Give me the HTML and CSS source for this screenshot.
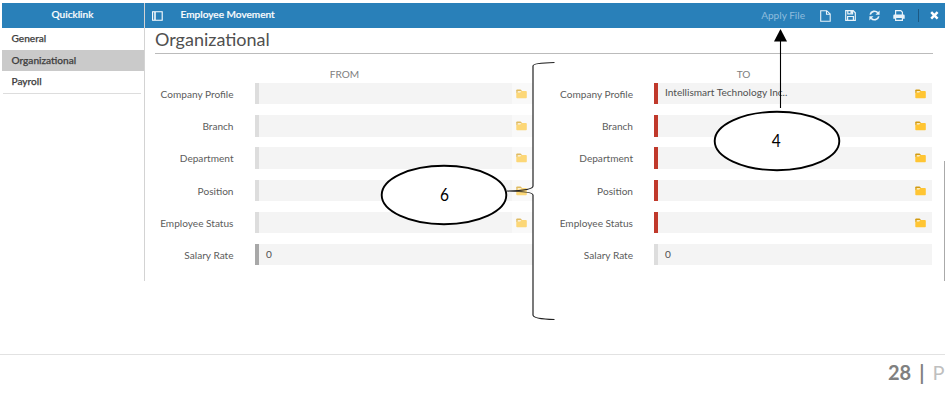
FILE: index.html
```html
<!DOCTYPE html>
<html lang="en">
<head>
<meta charset="utf-8">
<title>Employee Movement</title>
<link rel="stylesheet" href="styles.css">
</head>
<body>
<svg class="defs" aria-hidden="true">
  <symbol id="folder" viewBox="0 0 11 10">
    <path d="M.3 4V1.2Q.3.4 1.1.4h3.3q.5 0 .8.5l.5.9v2.2z" fill="#d39b10"/>
    <path d="M1.6 2.1h3.6V4H1.6z" fill="#fff4d5"/>
    <path d="M.3 3.5h3.9l1.2-1.4H10q.8 0 .8.8v5.6q0 .8-.8.8H1.1q-.8 0-.8-.8z" fill="#ffc533"/>
  </symbol>
</svg>
<div class="app">
  <aside class="sidebar">
    <div class="side-head">Quicklink</div>
    <nav class="links">
      <a class="link">General</a>
      <a class="link active">Organizational</a>
      <a class="link">Payroll</a>
    </nav>
  </aside>
  <main class="main">
    <header class="bar">
      <svg class="panel" width="11" height="10" viewBox="0 0 11 10" fill="none" stroke="#fff"><path d="M.6.8h9.6v8.4H.6z" stroke-width="1.1"/><path d="M3 1v8" stroke-width="1.5"/></svg>
      <span class="bar-title">Employee Movement</span>
      <div class="tools">
        <span class="apply">Apply File</span>
        <svg class="file" width="11" height="12" viewBox="0 0 11 12" fill="none" stroke="#e8f2f9" stroke-width="1.1"><path d="M.7.7h6L10.2 4v7.3H.7zM6.5.8v3.5h3.6"/></svg>
        <svg class="save" width="11" height="11" viewBox="0 0 11 11" fill="none" stroke="#e8f2f9" stroke-width="1.2"><path d="M.7.7h7.5l2.1 2v7.6H.7z"/><path d="M2.8.8v3h4.8v-3M2.6 10V6.5h5.8V10"/><path d="M6.2 1v2.5" stroke-width="1.6"/></svg>
        <svg class="sync" width="11" height="11" viewBox="0 0 11 11"><path d="M1.2 4.6A4.4 4.4 0 0 1 8.8 2.8M9.8 6.4A4.4 4.4 0 0 1 2.2 8.2" fill="none" stroke="#e8f2f9" stroke-width="1.7"/><path d="M10.6.6v4.1H6.5zM.4 10.4V6.3h4.1z" fill="#e8f2f9"/></svg>
        <svg class="print" width="12" height="11" viewBox="0 0 12 11"><path d="M2.6 5V.6h5.2l1.6 1.6V5" fill="none" stroke="#e8f2f9" stroke-width="1.2"/><path d="M1.5 4.6h9q1.2 0 1.2 1.2v3H.3v-3q0-1.2 1.2-1.2z" fill="#e8f2f9"/><path d="M2.6 7.4h6.8v2.9H2.6z" fill="#2980b9" stroke="#e8f2f9" stroke-width="1.2"/></svg>
        <i class="sep"></i>
        <svg class="close" width="9" height="9" viewBox="0 0 9 9"><path d="M1.2 1.2l6.4 6.4M7.6 1.2L1.2 7.6" stroke="#fff" stroke-width="2.5"/></svg>
      </div>
    </header>
    <h1 class="heading">Organizational</h1>
    <div class="form">
      <section class="column from">
        <h2 class="caption">FROM</h2>
        <div class="row"><label>Company Profile</label><div class="field"><span class="pick"><svg><use href="#folder"/></svg></span></div></div>
        <div class="row"><label>Branch</label><div class="field"><span class="pick"><svg><use href="#folder"/></svg></span></div></div>
        <div class="row"><label>Department</label><div class="field"><span class="pick"><svg><use href="#folder"/></svg></span></div></div>
        <div class="row"><label>Position</label><div class="field"><span class="pick"><svg><use href="#folder"/></svg></span></div></div>
        <div class="row"><label>Employee Status</label><div class="field"><span class="pick"><svg><use href="#folder"/></svg></span></div></div>
        <div class="row"><label>Salary Rate</label><div class="field dark">0</div></div>
      </section>
      <section class="column to">
        <h2 class="caption">TO</h2>
        <div class="row"><label>Company Profile</label><div class="field required"><span class="value">Intellismart Technology Inc..</span><span class="pick"><svg><use href="#folder"/></svg></span></div></div>
        <div class="row"><label>Branch</label><div class="field required"><span class="pick"><svg><use href="#folder"/></svg></span></div></div>
        <div class="row"><label>Department</label><div class="field required"><span class="pick"><svg><use href="#folder"/></svg></span></div></div>
        <div class="row"><label>Position</label><div class="field required"><span class="pick"><svg><use href="#folder"/></svg></span></div></div>
        <div class="row"><label>Employee Status</label><div class="field required"><span class="pick"><svg><use href="#folder"/></svg></span></div></div>
        <div class="row"><label>Salary Rate</label><div class="field">0</div></div>
      </section>
    </div>
    <i class="scroll"></i>
  </main>
</div>
<footer class="footer"><b class="page">28</b><i class="pipe">|</i><span class="p">P</span></footer>
<svg class="notes" width="949" height="411" viewBox="0 0 949 411">
  <path d="M780.5 108V40" stroke="#000" stroke-width="1.1"/>
  <path d="M780.5 29l6.5 12.5h-13z"/>
  <path d="M554.500 62.500Q533 63 533 66V186Q533 190.500 507 191Q533 191.500 533 195V315Q533 319 554.500 319.500" fill="none" stroke="#222" stroke-width="1.200"/>
  <ellipse cx="444" cy="195" rx="62.300" ry="29.200" fill="#fff" stroke="#000" stroke-width="1.900"/>
  <ellipse cx="777" cy="141" rx="62.300" ry="29.200" fill="#fff" stroke="#000" stroke-width="1.900"/>
  <text transform="translate(444.500 201) scale(.86 1)" text-anchor="middle">6</text>
  <text transform="translate(776.300 147) scale(.86 1)" text-anchor="middle">4</text>
</svg>
</body>
</html>
```
FILE: styles.css
```css
* { box-sizing: border-box; }
body { margin: 0; width: 949px; height: 411px; overflow: hidden; background: #fff; font-family: Lato, "Liberation Sans", sans-serif; font-size: 10.100px; color: #505050; position: relative; }
svg { display: block; flex: none; }
.defs { width: 0; height: 0; position: absolute; }
.app { display: flex; width: 943px; height: 278px; margin: 0 0 0 2px; position: relative; top: 3px; }
.sidebar { width: 143px; border-right: 1px solid #d3d3d3; flex: none; }
.side-head { height: 25px; line-height: 23px; background: #2980b9; color: #fff; text-align: center; font-weight: 500; -webkit-text-stroke: .2px #fff; padding-right: 1px; }
.links { height: 66px; }
.link { display: block; height: 21.500px; line-height: 21px; padding-left: 9.500px; font-weight: 500; color: #404040; -webkit-text-stroke: .25px #404040; }
.link.active { background: #cacaca; line-height: 20px; }
.links::after { content: ""; display: block; height: 1px; margin: 0 3px 0 1px; background: #ddd; }
.main { flex: 1; min-width: 0; position: relative; }
.bar { height: 25px; background: #2980b9; display: flex; align-items: center; color: #fff; padding-left: 7px; }
.panel { margin-top: 1px; }
.bar-title { margin-left: 17.500px; font-weight: 500; line-height: 20px; height: 24px; -webkit-text-stroke: .2px #fff; }
.tools { margin-left: auto; display: flex; align-items: center; padding-right: 6px; }
.apply { color: #8fbddd; margin-right: 15px; height: 14px; line-height: 12px; }
.save { margin-left: 14px; }
.sync { margin-left: 13px; }
.print { margin-left: 13px; }
.sep { width: 1px; height: 13px; background: #1c5984; margin: 0 11px 0 13px; }
.heading { margin: 0 12px 0 10px; height: 26px; line-height: 23px; border-bottom: 1px solid #bbb; font-size: 18px; font-weight: 400; color: #505050; }
.form { display: flex; gap: 21px; padding: 15px 0 0 10px; }
.column { width: 378px; flex: none; }
.caption { margin: 0; height: 14px; line-height: 11px; padding-left: 1px; font-size: 10.100px; font-weight: 400; color: #808080; text-align: center; }
.row { display: flex; height: 21.400px; margin-bottom: 10.800px; }
.row label { width: 78.500px; margin-right: 21.500px; text-align: right; line-height: 23px; color: #5c5c5c; white-space: nowrap; }
.to label { width: 79px; margin-right: 21px; }
.field { flex: 1; height: 21.400px; line-height: 20px; padding-left: 7px; border-left: 4px solid #ddd; background: #f4f4f4; display: flex; }
.value { line-height: 19px; }
.field.dark { border-color: #a8a8a8; }
.field.required { border-color: #c0392b; }
.pick { margin-left: auto; width: 21px; height: 21.400px; display: flex; padding: 6px 0 0 4px; }
.pick svg { width: 11px; height: 10px; }
.from .pick { background: #f9f9f9; }
.from .pick svg { opacity: .65; }
.scroll { position: absolute; right: 0; top: 158px; width: 1.500px; height: 120px; background: #aaa; }
.footer { height: 57px; margin-top: 76px; border-top: 1px solid #e2e2e2; color: #808080; font-size: 20px; line-height: 34px; display: flex; width: 945px; overflow: hidden; padding-left: 888px; }
.pipe { margin-left: 8px; font-style: normal; font-weight: 700; }
.p { margin-left: 8px; color: #bfbfbf; }
.notes { position: absolute; left: 0; top: 0; }
.notes text { font-family: Lato, "Liberation Sans", sans-serif; font-size: 18px; fill: #000; }
```
